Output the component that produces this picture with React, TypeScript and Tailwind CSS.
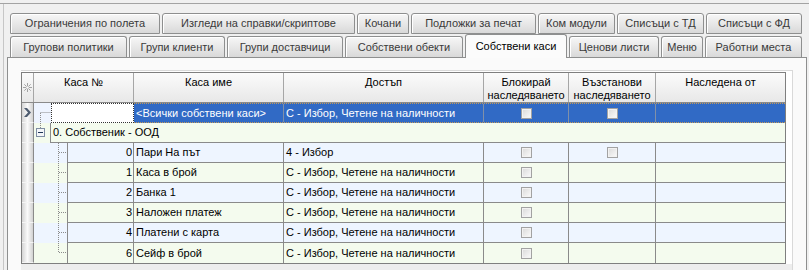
import React from 'react';

const topTabs = [
  { label: 'Ограничения по полета', w: 'w-[150px]' },
  { label: 'Изгледи на справки/скриптове', w: 'w-[193px]' },
  { label: 'Кочани', w: 'w-[52px]' },
  { label: 'Подложки за печат', w: 'w-[125px]' },
  { label: 'Ком модули', w: 'w-[77px]' },
  { label: 'Списъци с ТД', w: 'w-[87px]' },
  { label: 'Списъци с ФД', w: 'w-[96px]' },
];

const bottomTabs = [
  { label: 'Групови политики', w: 'w-[117px]' },
  { label: 'Групи клиенти', w: 'w-[96px]' },
  { label: 'Групи доставчици', w: 'w-[116px]' },
  { label: 'Собствени обекти', w: 'w-[118px]' },
  { label: 'Собствени каси', w: 'w-[102px]', active: true },
  { label: 'Ценови листи', w: 'w-[90px]' },
  { label: 'Меню', w: 'w-[42px]' },
  { label: 'Работни места', w: 'w-[97px]' },
];

const rows = [
  { no: '0', name: 'Пари На път', access: '4 - Избор', restore: true },
  { no: '1', name: 'Каса в брой', access: 'С - Избор, Четене на наличности' },
  { no: '2', name: 'Банка 1', access: 'С - Избор, Четене на наличности' },
  { no: '3', name: 'Наложен платеж', access: 'С - Избор, Четене на наличности' },
  { no: '4', name: 'Платени с карта', access: 'С - Избор, Четене на наличности' },
  { no: '6', name: 'Сейф в брой', access: 'С - Избор, Четене на наличности' },
];

const tabBase =
  'flex items-center justify-center border border-[#8e8f8f] rounded-t-[3px] bg-linear-to-b from-[#f7f7f7] to-[#d9d9d9] shadow-[inset_1px_1px_0_#ffffff] text-[#3a3a3a] whitespace-nowrap';

const Checkbox = () => (
  <span className="block w-[11px] h-[11px] border border-[#a2a2a2] bg-linear-to-br from-[#d9d9d9] to-[#fbfbfb] shadow-[inset_0_0_0_1px_#f2f2f2]" />
);

const Indicator = ({ children }: { children?: React.ReactNode }) => (
  <div className="w-[12px] h-full shrink-0 border-r border-b border-r-[#8a8a8a] border-b-[#f4f4f4] bg-linear-to-r from-[#d4d4d4] via-[#fafafa] to-[#d2d2d2] flex items-center justify-center">
    {children}
  </div>
);

const App: React.FC = () => {
  return (
    <div className="w-[809px] h-[270px] overflow-hidden bg-[#f0f0f0] pt-[3px] font-['Liberation_Sans',Arial,sans-serif] text-[11px] text-black">
      <div className="h-full border-t border-[#a3a3a3]">
        <div className="h-full ml-[3px] border-l border-[#c6c6c6] pl-[3px] pt-[9px] flex flex-col">
          {/* Tabs - upper row */}
          <div className="flex gap-[2px] ml-[3px] h-[21px]">
            {topTabs.map(t => (
              <div key={t.label} className={`${tabBase} ${t.w} h-[21px]`}>
                {t.label}
              </div>
            ))}
          </div>

          {/* Tabs - lower row */}
          <div className="relative z-10 flex items-end gap-[2px] ml-[3px] h-[23px]">
            {bottomTabs.map(t =>
              t.active ? (
                <div
                  key={t.label}
                  className={`${t.w} h-[24px] -mb-px flex items-center justify-center border border-b-0 border-[#8e8f8f] rounded-t-[3px] bg-[#fbfbfb] text-black whitespace-nowrap`}
                >
                  {t.label}
                </div>
              ) : (
                <div key={t.label} className={`${tabBase} ${t.w} h-[21px] border-b-0`}>
                  {t.label}
                </div>
              )
            )}
          </div>

          {/* Pane */}
          <div className="flex-1 w-[800px] border border-[#8e8f8f] bg-[#fafafa] pl-[13px] pt-[12px]">
            <div className="w-[772px] h-full border-t border-r border-[#d9d9d9] bg-white pt-[1px]">
              <div className="w-[765px] border border-[#7f7f7f] bg-white">
                {/* Header */}
                <div className="flex h-[30px] border-b border-[#8a8a8a] bg-linear-to-b from-[#fbfbfb] to-[#e8e8e8] leading-[13px]">
                  <div className="w-[12px] shrink-0 border-r border-[#a6a6a6] flex items-center justify-center">
                    <svg width="9" height="9" viewBox="0 0 9 9" className="mb-[1px]">
                      <g stroke="#a3a3a3" strokeWidth="1">
                        <line x1="4.5" y1="0" x2="4.5" y2="9" />
                        <line x1="0" y1="4.5" x2="9" y2="4.5" />
                        <line x1="1.3" y1="1.3" x2="7.7" y2="7.7" />
                        <line x1="7.7" y1="1.3" x2="1.3" y2="7.7" />
                      </g>
                      <circle cx="4.5" cy="4.5" r="1.3" fill="#fbfbfb" />
                    </svg>
                  </div>
                  <div className="w-[100px] shrink-0 border-r border-[#a6a6a6] text-center pt-[3px]">Каса №</div>
                  <div className="w-[150px] shrink-0 border-r border-[#a6a6a6] text-center pt-[3px]">Каса име</div>
                  <div className="w-[200px] shrink-0 border-r border-[#a6a6a6] text-center pt-[3px]">Достъп</div>
                  <div className="w-[85px] shrink-0 border-r border-[#a6a6a6] text-center pt-[3px]">
                    Блокирай
                    <br />
                    наследяването
                  </div>
                  <div className="w-[87px] shrink-0 border-r border-[#a6a6a6] text-center pt-[3px]">
                    Възстанови
                    <br />
                    наследяването
                  </div>
                  <div className="flex-1 text-center pt-[3px]">Наследена от</div>
                </div>

                {/* Selected "all" row */}
                <div className="flex h-[20px]">
                  <Indicator>
                    <svg width="7" height="9" viewBox="0 0 7 9">
                      <polygon points="0,0 3,0 7,4.5 3,9 0,9 4,4.5" fill="#4f5d70" />
                    </svg>
                  </Indicator>
                  <div className="w-[17px] shrink-0 bg-[#eef4ff]">
                    <svg width="17" height="20" viewBox="0 0 17 20">
                      <g stroke="#8a8a8a" strokeDasharray="1 1">
                        <line x1="6.5" y1="9.5" x2="17" y2="9.5" />
                        <line x1="6.5" y1="10" x2="6.5" y2="20" />
                      </g>
                    </svg>
                  </div>
                  <div className="w-[83px] shrink-0 bg-white border border-dotted border-[#333333]" />
                  <div className="flex flex-1 bg-[#316ac5] text-white border-y border-dotted border-[#c49a5a]">
                    <div className="w-[150px] shrink-0 border-r border-[#8090a8] pl-[2px] flex items-center whitespace-nowrap">
                      &lt;Всички собствени каси&gt;
                    </div>
                    <div className="w-[200px] shrink-0 border-r border-[#8090a8] pl-[2px] flex items-center whitespace-nowrap">
                      С - Избор, Четене на наличности
                    </div>
                    <div className="w-[85px] shrink-0 border-r border-[#8090a8] flex items-center justify-center">
                      <Checkbox />
                    </div>
                    <div className="w-[87px] shrink-0 border-r border-[#8090a8] flex items-center justify-center">
                      <Checkbox />
                    </div>
                    <div className="flex-1" />
                  </div>
                </div>

                {/* Group row */}
                <div className="flex h-[20px] bg-[#f4fbee]">
                  <Indicator />
                  <div className="w-[16px] shrink-0 relative">
                    <svg width="16" height="20" viewBox="0 0 16 20" className="absolute left-0 top-0">
                      <line x1="6.5" y1="0" x2="6.5" y2="5" stroke="#8a8a8a" strokeDasharray="1 1" />
                      <rect x="2.5" y="5.5" width="8" height="8" fill="#f4f6f9" stroke="#7f8ea3" />
                      <line x1="4" y1="9.5" x2="9" y2="9.5" stroke="#1f3556" />
                    </svg>
                  </div>
                  <div className="flex-1 border-l border-b border-[#8a8a8a] pl-[2px] flex items-center whitespace-nowrap">
                    0. Собственик - ООД
                  </div>
                </div>

                {/* Data rows */}
                {rows.map((r, i) => {
                  const last = i === rows.length - 1;
                  const bg = i % 2 === 0 ? 'bg-[#eef5ff]' : 'bg-[#f4fbee]';
                  const cell = last ? 'border-r border-[#8a8a8a]' : 'border-r border-b border-[#8a8a8a]';
                  return (
                    <div key={r.no} className={`flex h-[20px] ${bg}`}>
                      <Indicator />
                      <div className="w-[33px] shrink-0">
                        <svg width="33" height="20" viewBox="0 0 33 20">
                          <g stroke="#8a8a8a" strokeDasharray="1 1">
                            <line x1="24.5" y1="0" x2="24.5" y2={last ? 10 : 20} />
                            <line x1="25" y1="9.5" x2="33" y2="9.5" />
                          </g>
                        </svg>
                      </div>
                      <div className={`w-[67px] shrink-0 border-l ${cell} text-right pr-[1px] flex items-center justify-end`}>
                        {r.no}
                      </div>
                      <div className={`w-[150px] shrink-0 ${cell} pl-[2px] flex items-center whitespace-nowrap`}>{r.name}</div>
                      <div className={`w-[200px] shrink-0 ${cell} pl-[2px] flex items-center whitespace-nowrap`}>{r.access}</div>
                      <div className={`w-[85px] shrink-0 ${cell} flex items-center justify-center`}>
                        <Checkbox />
                      </div>
                      <div className={`w-[87px] shrink-0 ${cell} flex items-center justify-center`}>
                        {r.restore && <Checkbox />}
                      </div>
                      <div className={`flex-1 ${last ? '' : 'border-b border-[#8a8a8a]'}`} />
                    </div>
                  );
                })}
              </div>
              <div className="h-[12px] bg-[#ededed]" />
            </div>
          </div>
        </div>
      </div>
    </div>
  );
};

export default App;
